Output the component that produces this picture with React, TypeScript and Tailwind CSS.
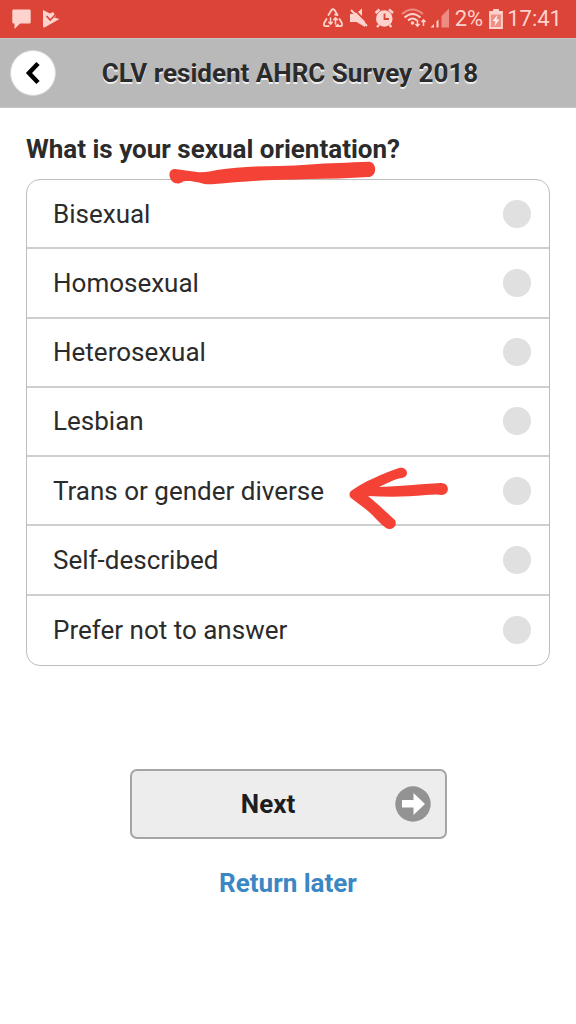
import React, { useState } from "react";

const options = [
  "Bisexual",
  "Homosexual",
  "Heterosexual",
  "Lesbian",
  "Trans or gender diverse",
  "Self-described",
  "Prefer not to answer",
];

function StatusBar() {
  return (
    <div className="flex h-[38px] items-center justify-between bg-[#db4437] pr-3.5 pl-3 text-[#ffd3cd]">
      <div className="flex items-center gap-3">
        <svg className="h-5 w-[19px]" viewBox="0 0 19 20" fill="currentColor" aria-hidden="true">
          <path d="M1.5 0.5h16a1.2 1.2 0 0 1 1.2 1.2v11.6a1.2 1.2 0 0 1-1.2 1.2H8L2.5 20v-5.5h-1A1.2 1.2 0 0 1 .3 13.300V1.700A1.200 1.200 0 0 1 1.500.5z" />
        </svg>
        <svg className="h-5 w-[17px]" viewBox="0 0 17 20" aria-hidden="true">
          <path d="M0 1 7 4.500 10 3l3 4-2 1.500 5.500 1.500L1.500 18.500Q0 19 0 17z" fill="currentColor" />
          <path d="m3.500 7 3.700 4L14 4" fill="none" stroke="#db4437" strokeWidth="1.600" />
        </svg>
      </div>
      <div className="flex items-center">
        <svg className="h-[22px] w-[129px]" viewBox="322 9 129 22" fill="none" stroke="currentColor" aria-hidden="true">
          <g strokeWidth="1.800" strokeLinecap="round" strokeLinejoin="round">
            <path d="m328.500 16 3-5q1.500-1.500 3 0l3 5-2.500-.3M326.500 20l-2.300 4q-1 3 1.500 3.200h3M339.500 20l2.300 4q1 3-1.500 3.200h-4l1.500-1.500" />
            <path d="M330.500 19v6m-1.800-1.800 1.800 2 1.800-2M335.500 25v-6m-1.800 1.800 1.800-2 1.800 2" strokeWidth="1.500" />
          </g>
          <path d="M350 15h4l2-1.500 9 9V28l-8.500-5H350zM358 13l4-3.500V17z" fill="currentColor" stroke="none" />
          <path d="m351 11 16 16" strokeWidth="2" />
          <g>
            <circle cx="384.300" cy="19.500" r="8.300" fill="currentColor" stroke="none" />
            <path d="m375.500 14 4-3.500M389 10.500l4 3.500M379 26l-2 2M389.500 26l2 2" strokeWidth="2.400" />
            <path d="M384.500 14.500v5.500h4.500" stroke="#db4437" strokeWidth="1.800" />
          </g>
          <path d="M402 15q10.500-9 21 0" strokeWidth="2" opacity=".5" />
          <path d="M404.500 18.500q8-7 16 0M408 21.500q4.500-4 9 0" strokeWidth="2" />
          <circle cx="412.500" cy="24" r="1.800" fill="currentColor" stroke="none" />
          <path d="M417.500 21v6m-2-2 2 2.200 2-2.200M423.500 27v-6m-2 2 2-2.200 2 2.200" strokeWidth="1.500" />
          <path d="m434 25-3.500 3.500h3.500z" fill="currentColor" stroke="none" />
          <path d="M438.500 20.500v8h-2v-6z" fill="currentColor" stroke="none" />
          <path d="M449 9.500v19h-7.500V17z" fill="currentColor" stroke="none" opacity=".5" />
        </svg>
        <span className="ml-1 text-[22px] leading-6">2%</span>
        <svg className="ml-1.5 h-5 w-3.5" viewBox="0 0 14 20" aria-hidden="true">
          <path d="M5 1h4v2h4V19H1V3h4z" fill="#f08f86" stroke="currentColor" strokeWidth="1.800" />
          <path d="M5 .5h4V3h4v2.500H1V3h4z" fill="currentColor" />
          <path d="M8.500 6 3.500 12h3L5.500 17l5-6.500h-3z" fill="#fff0ed" />
        </svg>
        <time className="ml-1 text-[22px] leading-6">17:41</time>
      </div>
    </div>
  );
}

export default function App() {
  const [answer, setAnswer] = useState("");
  return (
    <div className="min-h-screen bg-white font-['Roboto',sans-serif] text-[#2b2b2b]">
      <StatusBar />
      <header className="grid h-[70px] grid-cols-[46px_1fr_42px] items-center border-y border-[#c6c6c6] bg-[#b9b9b9] px-[10px]">
        <button type="button" aria-label="Back" className="flex size-[46px] items-center justify-center rounded-full border border-[#d5d5d5] bg-white text-black">
          <svg className="h-6 w-4" viewBox="0 0 16 24" fill="none" stroke="currentColor" strokeWidth="4.500" aria-hidden="true">
            <path d="M13 2.500 4 12l9 9.500" />
          </svg>
        </button>
        <h1 className="text-center text-[26px] leading-8 font-bold text-shadow-[0_2px_0_#eeeeee]">CLV resident AHRC Survey 2018</h1>
      </header>
      <form className="px-[26px] pt-[25px]" onSubmit={(e) => e.preventDefault()}>
        <div className="relative">
          <h2 id="question" className="text-[26px] leading-8 font-bold">What is your sexual orientation?</h2>
          <svg className="pointer-events-none absolute top-7 left-[142px] z-10 h-6 w-[210px]" viewBox="168 161 210 24" fill="#f44336" aria-hidden="true">
            <path d="M175 169c8 1 14 2 22 3 7 1 14-1 20-2 20-3 42-4 62-4 22 0 40-3 60-3 9-.5 20-1 30-1.300 8 .3 8.500 14 0 15.300-20 1-40 2-60 2-16 1-32 .8-48 1.500-14 1-27 2-40 3-8 .5-14 2-22-1-6-1-11-2-16-1-6 5-13 0-13.500-6-.5-4 2-6.500 5.500-6.500z" />
          </svg>
        </div>
        <fieldset aria-labelledby="question" className="mt-[14px] rounded-[14px] border border-[#bdbdbd]">
          <div className="grid min-h-[485px] auto-rows-fr divide-y-2 divide-[#cfcfcf]">
            {options.map((option) => (
              <label key={option} className="relative flex items-center justify-between pr-[18px] pl-[26px] text-[26px] leading-8">
                <span>{option}</span>
                <input
                  type="radio"
                  name="orientation"
                  value={option}
                  checked={answer === option}
                  onChange={() => setAnswer(option)}
                  className="size-7 appearance-none rounded-full bg-[#e0e0e0] checked:bg-[#3388cc]"
                />
                {option === "Trans or gender diverse" && (
                  <svg className="pointer-events-none absolute top-2 left-[322px] z-10 h-[66px] w-[102px]" viewBox="349 467 102 66" fill="#f44336" aria-hidden="true">
                    <path d="M351 493c12-9 31-17 48-23 9-2 11 9 3 10-8 1-14 5-23 9 20-.5 40-3 62-4 9 0 9 11 1 12-4-1-10-.5-16 0-19 2-39 2-58 1 9 7 19 17 27 24 3 6-3 11-9 8-7-5-12-12-18-17-6-5-12-9-17-13-2-2-2-5 0-7z" />
                  </svg>
                )}
              </label>
            ))}
          </div>
        </fieldset>
        <div className="mt-[103px] flex flex-col items-center gap-7">
          <button type="submit" className="grid h-[70px] w-full max-w-[317px] grid-cols-[1fr_36px] items-center rounded-[7px] border-2 border-[#a5a5a5] bg-[#ededed] pr-3.5 pl-[14px] text-[26px] leading-8 font-bold text-[#1e1e1e]">
            <span className="pr-1">Next</span>
            <svg className="size-9" viewBox="0 0 36 36" aria-hidden="true">
              <circle cx="18" cy="18" r="17.700" fill="#939393" />
              <path d="M7 14h11.500V7L30 18 18.500 29v-7.500H7z" fill="white" />
            </svg>
          </button>
          <a href="#later" className="text-[26px] leading-8 font-bold text-[#3a87c4]">Return later</a>
        </div>
      </form>
    </div>
  );
}
